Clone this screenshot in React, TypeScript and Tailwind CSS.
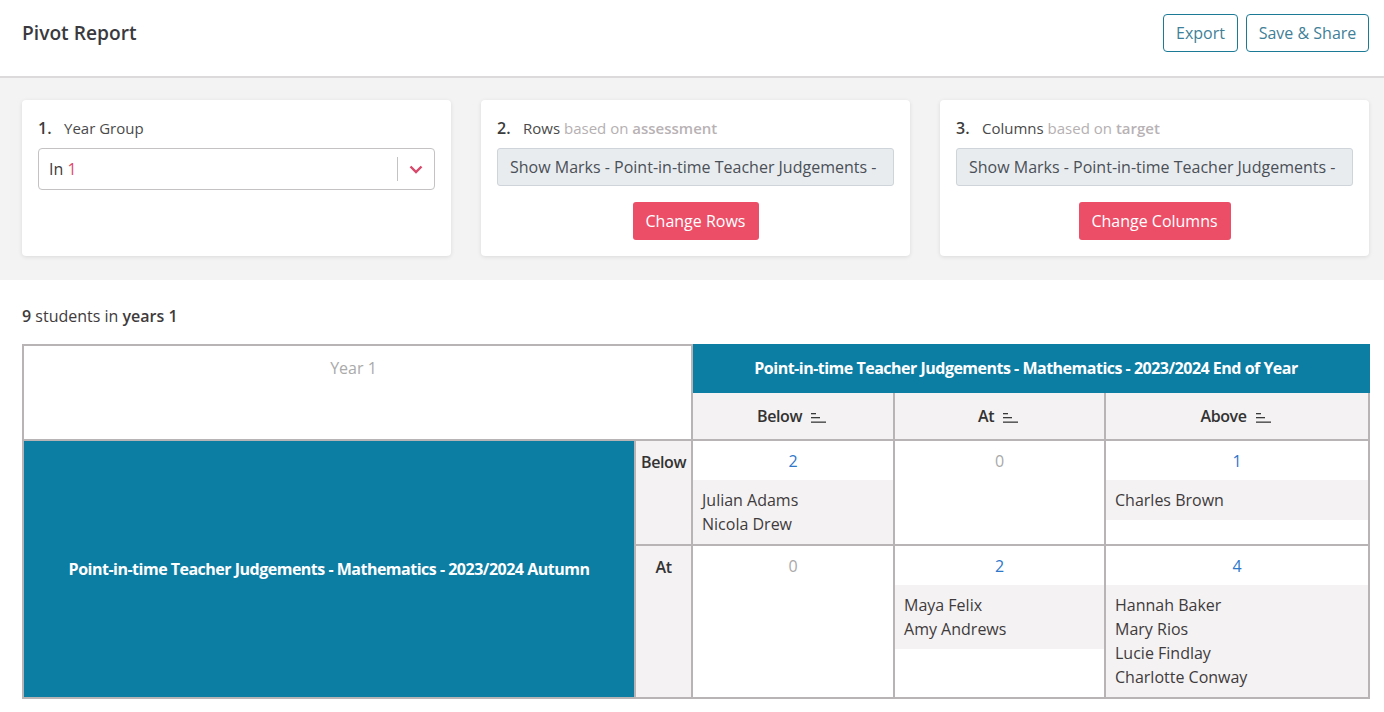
import React from "react";

const cellBorder = "border-2 border-[#b8b3b5]";

function SortIcon() {
  return (
    <svg width="16" height="12" viewBox="0 0 16 12" className="ml-[9px] inline-block" fill="#3a3a3a">
      <rect x="0" y="1" width="5" height="1.3" />
      <rect x="0" y="5" width="9" height="1.3" />
      <rect x="0" y="9.5" width="15" height="1.3" />
    </svg>
  );
}

function StudentCell({ count, names }: { count: number; names: string[] }) {
  return (
    <td className={`${cellBorder} p-0 align-top`}>
      <div
        className={`h-[39px] text-center leading-[40px] ${
          count > 0 ? "text-[#2f77c9]" : "text-[#a9a9a9]"
        }`}
      >
        {count}
      </div>
      {names.length > 0 && (
        <div className="bg-[#f4f2f3] py-2 pl-[9px] leading-6 text-[#3f3b3c]">
          {names.map((name) => (
            <div key={name}>{name}</div>
          ))}
        </div>
      )}
    </td>
  );
}

function ColumnHead({ label }: { label: string }) {
  return (
    <td className={`${cellBorder} bg-[#f4f2f3] p-0 pr-[2px] text-center font-semibold text-[#333]`}>
      <span className="tracking-[-0.4px]">{label}</span>
      <SortIcon />
    </td>
  );
}

function StepLabel({ num, children }: { num: string; children: React.ReactNode }) {
  return (
    <div className="flex h-[19px] items-center text-[15px] leading-5 text-[#4a4a4a]">
      <span className="w-[26px] text-base font-semibold text-[#3c3c3c]">{num}</span>
      <span>{children}</span>
    </div>
  );
}

function ShowMarksCard({
  num,
  label,
  kind,
  action,
  buttonWidth,
}: {
  num: string;
  label: string;
  kind: string;
  action: string;
  buttonWidth: string;
}) {
  return (
    <div className="h-[156px] flex-1 rounded-[4px] bg-white px-4 pt-[18px] shadow-[0_1px_4px_rgba(0,0,0,0.1)]">
      <StepLabel num={num}>
        {label} <span className="text-[#b5b0b2]">based on</span>{" "}
        <span className="font-semibold text-[#b8b2b5]">{kind}</span>
      </StepLabel>
      <div className="mt-[11px] flex h-[38px] items-center overflow-hidden rounded-[3px] border border-[#ced4da] bg-[#e9ecef] px-3 text-base whitespace-nowrap text-[#495057]">
        Show Marks - Point-in-time Teacher Judgements -
      </div>
      <div className="mt-4 flex justify-center">
        <button className={`h-[38px] rounded-[3px] bg-[#ec4e68] text-base text-white ${buttonWidth}`}>
          {action}
        </button>
      </div>
    </div>
  );
}

export default function App() {
  return (
    <div className="min-h-[712px] bg-white font-['Open_Sans',sans-serif] text-base text-[#3f3b3c]">
      <header className="flex h-[78px] items-start justify-between border-b-2 border-[#dcdadb] pt-[14px] pr-[15px] pl-[22px]">
        <h1 className="mt-[3px] text-[19.2px] leading-8 font-semibold text-[#3a3a3e]">Pivot Report</h1>
        <div className="flex gap-2">
          <button className="h-[38px] w-[75px] rounded-[4px] border border-[#1d7a97] text-base text-[#3f7f98]">
            Export
          </button>
          <button className="h-[38px] w-[123px] rounded-[4px] border border-[#1d7a97] text-base text-[#3f7f98]">
            Save &amp; Share
          </button>
        </div>
      </header>

      <section className="flex h-[202px] gap-[30px] bg-[#f4f3f4] px-[22px] pr-[15px] pt-[22px]">
        <div className="h-[156px] flex-1 rounded-[4px] bg-white px-4 pt-[18px] shadow-[0_1px_4px_rgba(0,0,0,0.1)]">
          <StepLabel num="1.">Year Group</StepLabel>
          <div className="mt-[11px] flex h-[42px] items-center rounded-[4px] border border-[#c4c2c3] pl-[10px]">
            <span className="flex-1">
              In <span className="text-[#e0476a]">1</span>
            </span>
            <div className="h-[24px] w-px bg-[#c4c2c3]" />
            <svg width="14" height="9" viewBox="0 0 14 9" className="mx-[11px]" fill="none" stroke="#d9476a" strokeWidth="2.4">
              <path d="M1.5 1.5 L7 7 L12.5 1.5" />
            </svg>
          </div>
        </div>
        <ShowMarksCard num="2." label="Rows" kind="assessment" action="Change Rows" buttonWidth="w-[126px]" />
        <ShowMarksCard num="3." label="Columns" kind="target" action="Change Columns" buttonWidth="w-[152px]" />
      </section>

      <div className="pt-[26px] pr-[15px] pl-[22px]">
        <p className="text-base leading-5 text-[#3f3b3c]">
          <span className="font-semibold">9</span> students in <span className="font-semibold">years 1</span>
        </p>
        <table className="mt-[18px] w-[1346px] table-fixed border-collapse">
          <colgroup>
            <col className="w-[612px]" />
            <col className="w-[57px]" />
            <col className="w-[202px]" />
            <col className="w-[211px]" />
            <col className="w-[264px]" />
          </colgroup>
          <tbody>
            <tr className="h-[47px]">
              <td colSpan={2} rowSpan={2} className={`${cellBorder} pt-[10px] pr-[8px] text-center align-top text-[#aaaaaa]`}>
                Year 1
              </td>
              <td colSpan={3} className="border-2 border-[#0c7da3] bg-[#0c7da3] pr-[9px] pb-[1px] text-center text-base font-bold tracking-[-0.5px] text-white">
                Point-in-time Teacher Judgements - Mathematics - 2023/2024 End of Year
              </td>
            </tr>
            <tr className="h-[48px]">
              <ColumnHead label="Below" />
              <ColumnHead label="At" />
              <ColumnHead label="Above" />
            </tr>
            <tr className="h-[105px]">
              <td rowSpan={2} className={`${cellBorder} bg-[#0c7da3] text-center text-base font-bold tracking-[-0.5px] text-white`}>
                Point-in-time Teacher Judgements - Mathematics - 2023/2024 Autumn
              </td>
              <td className={`${cellBorder} bg-[#f4f2f3] pt-[9px] text-center align-top font-semibold tracking-[-0.4px] text-[#333]`}>
                Below
              </td>
              <StudentCell count={2} names={["Julian Adams", "Nicola Drew"]} />
              <StudentCell count={0} names={[]} />
              <StudentCell count={1} names={["Charles Brown"]} />
            </tr>
            <tr className="h-[152px]">
              <td className={`${cellBorder} bg-[#f4f2f3] pt-[9px] text-center align-top font-semibold tracking-[-0.4px] text-[#333]`}>
                At
              </td>
              <StudentCell count={0} names={[]} />
              <StudentCell count={2} names={["Maya Felix", "Amy Andrews"]} />
              <StudentCell count={4} names={["Hannah Baker", "Mary Rios", "Lucie Findlay", "Charlotte Conway"]} />
            </tr>
          </tbody>
        </table>
      </div>
    </div>
  );
}
